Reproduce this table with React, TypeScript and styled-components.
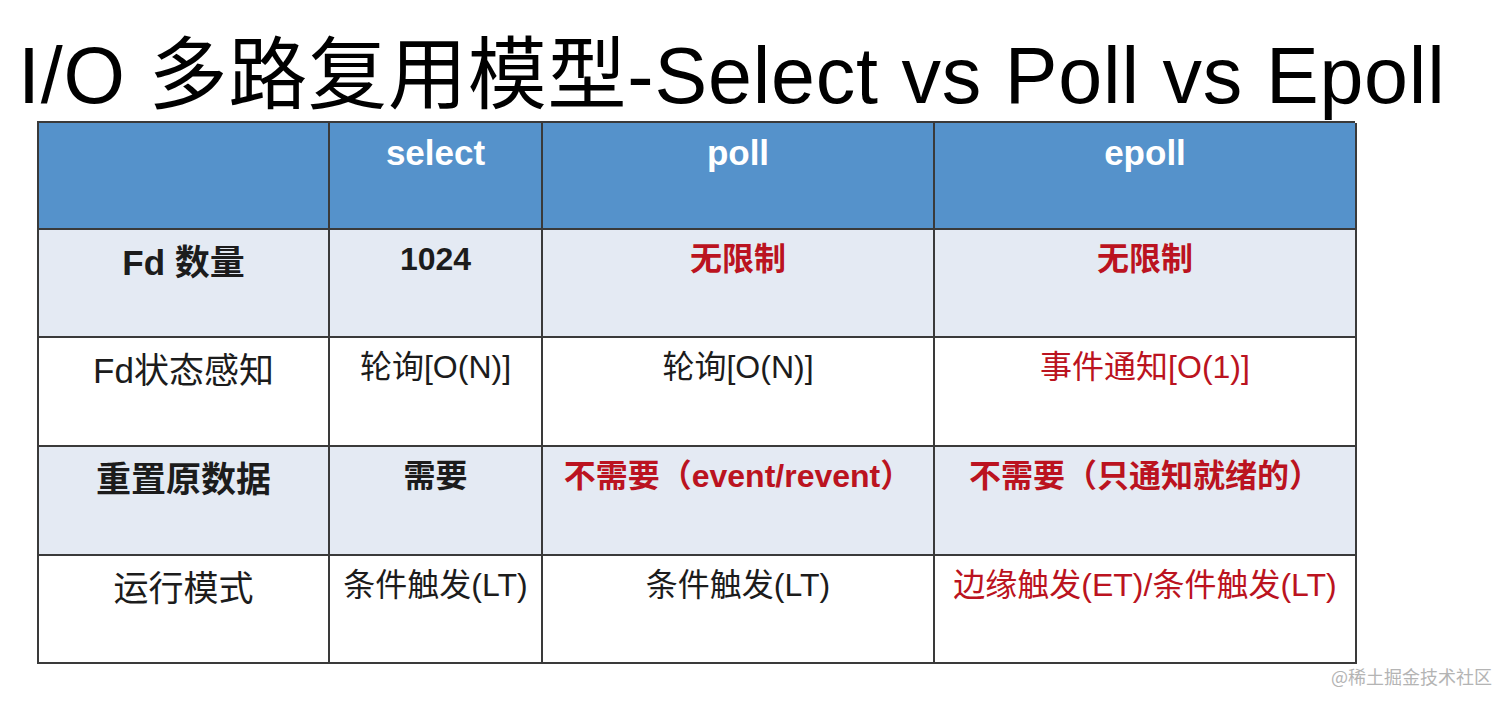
import React from "react";
import styled, { createGlobalStyle } from "styled-components";

const Global = createGlobalStyle`
  html, body { margin: 0; padding: 0; background: #ffffff; }
  body { font-family: "Liberation Sans", "Noto Sans CJK SC", sans-serif; }
`;

const Page = styled.div`
  width: 1512px;
  height: 706px;
  overflow: hidden;
  display: flex;
  flex-direction: column;
  background: #fff;
`;

const Title = styled.h1`
  margin: 36px 0 0 18px;
  height: 79px;
  font-family: "Liberation Sans", "Noto Sans CJK SC", sans-serif;
  font-weight: 400;
  font-size: 79px;
  line-height: 79px;
  color: #000;
  white-space: nowrap;
  letter-spacing: 0.8px;
`;

const Table = styled.div`
  margin: 6px 0 0 37px;
  width: 1318px;
  display: grid;
  grid-template-columns: 291px 213px 392px 422px;
  grid-template-rows: 107px 108px 109px 109px 108px;
  border-top: 2px solid #3a3a3a;
  border-left: 2px solid #3a3a3a;
  box-sizing: border-box;
`;

type Tone = "head" | "shade" | "plain";

const Cell = styled.div<{ $tone: Tone; $bold?: boolean; $red?: boolean; $lead?: boolean }>`
  box-sizing: border-box;
  border-right: 2px solid #3a3a3a;
  border-bottom: 2px solid #3a3a3a;
  background: ${(p) => (p.$tone === "head" ? "#5592cb" : p.$tone === "shade" ? "#e4eaf3" : "#ffffff")};
  color: ${(p) => (p.$tone === "head" ? "#ffffff" : p.$red ? "#bb1320" : "#1c1c1c")};
  font-weight: ${(p) => (p.$bold ? 700 : 400)};
  font-size: ${(p) => (p.$tone === "head" || p.$lead ? "35px" : "32px")};
  line-height: 1.2;
  text-align: center;
  white-space: nowrap;
  padding-top: ${(p) => (p.$tone === "head" ? "9px" : p.$lead ? "12px" : "10px")};
`;

const Footer = styled.div`
  display: flex;
  justify-content: flex-end;
  padding: 0 20px 0 0;
  font-family: "Noto Sans CJK SC", sans-serif;
  font-size: 18px;
  line-height: 24px;
  color: #b4b4b4;
`;

type Row = {
  tone: Tone;
  bold: boolean;
  cells: { text: string; red?: boolean }[];
};

const rows: Row[] = [
  {
    tone: "head",
    bold: true,
    cells: [{ text: "" }, { text: "select" }, { text: "poll" }, { text: "epoll" }],
  },
  {
    tone: "shade",
    bold: true,
    cells: [{ text: "Fd 数量" }, { text: "1024" }, { text: "无限制", red: true }, { text: "无限制", red: true }],
  },
  {
    tone: "plain",
    bold: false,
    cells: [
      { text: "Fd状态感知" },
      { text: "轮询[O(N)]" },
      { text: "轮询[O(N)]" },
      { text: "事件通知[O(1)]", red: true },
    ],
  },
  {
    tone: "shade",
    bold: true,
    cells: [
      { text: "重置原数据" },
      { text: "需要" },
      { text: "不需要（event/revent）", red: true },
      { text: "不需要（只通知就绪的）", red: true },
    ],
  },
  {
    tone: "plain",
    bold: false,
    cells: [
      { text: "运行模式" },
      { text: "条件触发(LT)" },
      { text: "条件触发(LT)" },
      { text: "边缘触发(ET)/条件触发(LT)", red: true },
    ],
  },
];

export default function App() {
  return (
    <Page>
      <Global />
      <Title>I/O 多路复用模型-Select vs Poll vs Epoll</Title>
      <Table>
        {rows.map((r, ri) =>
          r.cells.map((c, ci) => (
            <Cell key={`${ri}-${ci}`} $tone={r.tone} $bold={r.bold} $red={c.red} $lead={ci === 0}>
              {c.text}
            </Cell>
          ))
        )}
      </Table>
      <Footer>@稀土掘金技术社区</Footer>
    </Page>
  );
}
